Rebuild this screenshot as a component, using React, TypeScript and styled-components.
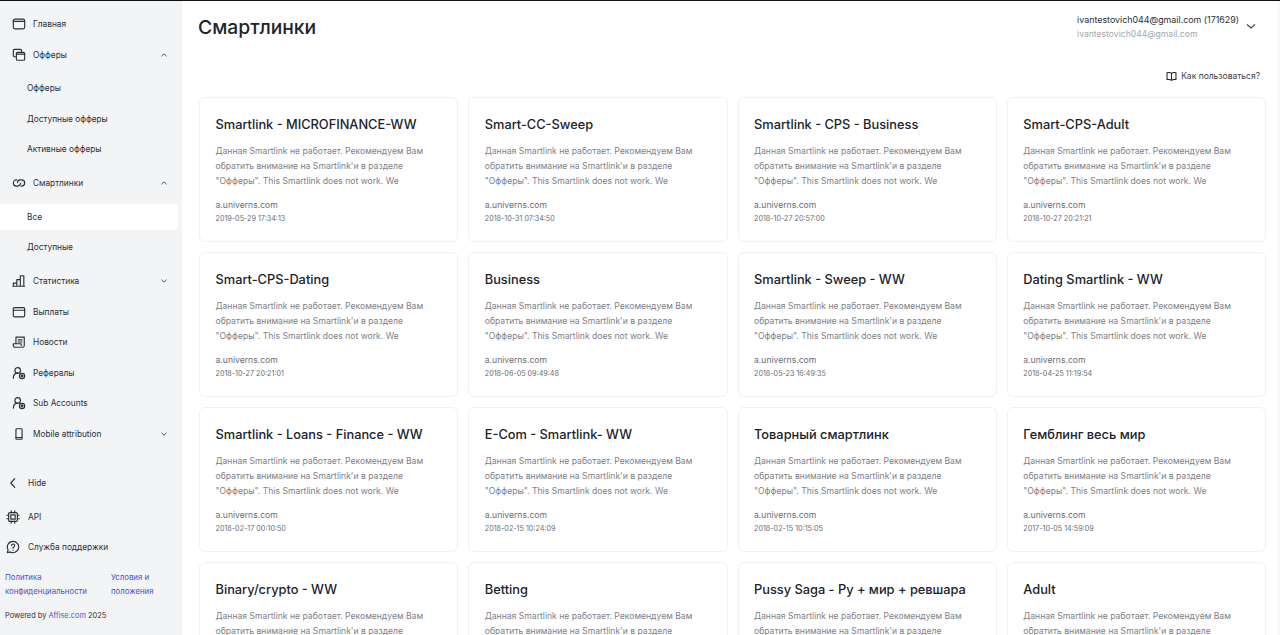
import React from "react";
import styled, { createGlobalStyle } from "styled-components";

const GlobalStyle = createGlobalStyle`
  html, body {
    margin: 0;
    height: 100%;
    overflow: hidden;
    background: #fff;
    font-family: Inter, "Noto Sans", sans-serif;
  }
  #root { height: 100%; }
  * { box-sizing: border-box; }
`;

const Page = styled.div`
  display: flex;
  height: 635px;
  border-top: 1px solid #111;
  overflow: hidden;
`;

const Sidebar = styled.aside`
  display: flex;
  flex-direction: column;
  flex: 0 0 182px;
  height: 100%;
  padding-top: 8px;
  background: #f3f4f6;
`;

const NavList = styled.nav`
  display: flex;
  flex-direction: column;
`;

const NavItem = styled.div`
  display: flex;
  flex: 0 0 auto;
  align-items: center;
  height: 30.5px;
  padding: 0 14px 0 12px;
  font-size: 8.3px;
  color: #2b2f38;
  svg.main { flex: 0 0 14px; margin-right: 7px; }
`;

const NavLabel = styled.span`
  flex: 1;
`;

const SubList = styled.div`
  display: flex;
  flex-direction: column;
  padding: 3.2px 0;
`;

const SubItem = styled.div<{ $active?: boolean }>`
  display: flex;
  align-items: center;
  height: ${({ $active }) => ($active ? "26.5px" : "30.5px")};
  margin: ${({ $active }) => ($active ? "2px 4px 2px 0" : "0")};
  padding-left: 27px;
  font-size: 8.3px;
  color: #2b2f38;
  background: ${({ $active }) => ($active ? "#fff" : "transparent")};
  border-radius: ${({ $active }) => ($active ? "0 4px 4px 0" : "0")};
`;

const BottomBlock = styled.div`
  display: flex;
  flex-direction: column;
  margin-top: 18.5px;
`;

const BottomItem = styled.div<{ $gap: number }>`
  display: flex;
  flex: 0 0 auto;
  align-items: center;
  height: 30.5px;
  margin-bottom: ${({ $gap }) => $gap}px;
  padding-left: 6px;
  font-size: 8.3px;
  color: #2b2f38;
  svg { flex: 0 0 14px; margin-right: 8px; }
`;

const LegalRow = styled.div`
  display: grid;
  grid-template-columns: 106px 1fr;
  margin-top: 9px;
  padding-left: 5px;
  font-size: 7.8px;
  line-height: 13.5px;
  color: #4a55c8;
`;

const Powered = styled.div`
  margin-top: 12px;
  padding-left: 5px;
  font-size: 7.4px;
  line-height: 12px;
  color: #2b2f38;
  a { color: #4a55c8; }
`;

const Main = styled.main`
  display: flex;
  flex-direction: column;
  flex: 1;
  min-width: 0;
  padding: 0 14px 0 17px;
  box-shadow: inset -3px 0 0 #f7f8f9;
`;

const Header = styled.header`
  display: flex;
  flex: 0 0 62px;
  justify-content: space-between;
  align-items: flex-start;
`;

const Title = styled.h1`
  margin: 13px 0 0 -1px;
  font-size: 19.3px;
  line-height: 27px;
  font-weight: 500;
  color: #20232a;
`;

const Account = styled.div`
  display: flex;
  align-items: center;
  gap: 6px;
  margin: 11px 9px 0 0;
`;

const AccountText = styled.div`
  font-size: 8.9px;
  line-height: 15px;
  color: #2b2f38;
  small {
    display: block;
    font-size: 8.6px;
    color: #a3a7ae;
  }
`;

const AccountChevron = styled.svg`
  margin-bottom: 3px;
`;

const HelpRow = styled.div`
  display: flex;
  flex: 0 0 26px;
  justify-content: flex-end;
  align-items: center;
  gap: 4px;
  margin-right: 6px;
  font-size: 8.5px;
  color: #3a3e46;
`;

const Grid = styled.div`
  display: grid;
  flex: 0 0 auto;
  grid-template-columns: repeat(4, 1fr);
  gap: 10.5px 10px;
  margin-top: 8px;
`;

const Card = styled.article`
  height: 144.5px;
  padding: 16.5px 15.5px 0;
  background: #fff;
  border: 1px solid #f0f1f3;
  border-radius: 6px;
`;

const CardTitle = styled.h2`
  margin: 0;
  font-size: 12.8px;
  line-height: 20px;
  font-weight: 500;
  color: #20232a;
  white-space: nowrap;
`;

const CardText = styled.p`
  margin: 9.5px 0 0;
  height: 45px;
  font-size: 8.6px;
  line-height: 15px;
  color: #7d8087;
`;

const Domain = styled.div`
  margin-top: 10px;
  font-size: 8.6px;
  line-height: 13px;
  color: #6a6d75;
`;

const Stamp = styled.div`
  margin-top: 1px;
  font-size: 7.2px;
  line-height: 12px;
  color: #6a6d75;
`;

const Ico = ({ children, size = 14 }: { children: React.ReactNode; size?: number }) => (
  <svg className="main" width={size} height={size} viewBox="0 0 16 16" fill="none" stroke="#2b2e35" strokeWidth="1.3" strokeLinecap="round" strokeLinejoin="round">
    {children}
  </svg>
);

const Chevron = ({ up }: { up?: boolean }) => (
  <svg width="8" height="8" viewBox="0 0 8 8" fill="none" stroke="#555" strokeWidth="1">
    <path d={up ? "M1.5 5.2 4 2.8l2.5 2.4" : "M1.5 2.8 4 5.2l2.5-2.4"} />
  </svg>
);

const TEXT =
  'Данная Smartlink не работает. Рекомендуем Вам обратить внимание на Smartlink\'и в разделе "Офферы". This Smartlink does not work. We';

const CARDS = [
  ["Smartlink - MICROFINANCE-WW", "2019-05-29 17:34:13"],
  ["Smart-CC-Sweep", "2018-10-31 07:34:50"],
  ["Smartlink - CPS - Business", "2018-10-27 20:57:00"],
  ["Smart-CPS-Adult", "2018-10-27 20:21:21"],
  ["Smart-CPS-Dating", "2018-10-27 20:21:01"],
  ["Business", "2018-06-05 09:49:48"],
  ["Smartlink - Sweep - WW", "2018-05-23 16:49:35"],
  ["Dating Smartlink - WW", "2018-04-25 11:19:54"],
  ["Smartlink - Loans - Finance - WW", "2018-02-17 00:10:50"],
  ["E-Com - Smartlink- WW", "2018-02-15 10:24:09"],
  ["Товарный смартлинк", "2018-02-15 10:15:05"],
  ["Гемблинг весь мир", "2017-10-05 14:59:09"],
  ["Binary/crypto - WW", "2017-10-05 14:59:09"],
  ["Betting", "2017-10-05 14:59:09"],
  ["Pussy Saga - Ру + мир + ревшара", "2017-10-05 14:59:09"],
  ["Adult", "2017-10-05 14:59:09"],
];

const referralIcon = (
  <>
    <circle cx="6.5" cy="5" r="3.2" />
    <path d="M1.5 14c0-3.2 1.8-5.6 5-5.8" />
    <circle cx="11.5" cy="11.5" r="3" />
    <circle cx="11.5" cy="11.5" r="1" fill="#2b2e35" />
  </>
);

const App = () => (
  <>
    <GlobalStyle />
    <Page>
      <Sidebar>
        <NavList>
          <NavItem>
            <Ico><rect x="1.5" y="2.5" width="13" height="11" rx="2" /><path d="M1.5 5h13" /></Ico>
            <NavLabel>Главная</NavLabel>
          </NavItem>
          <NavItem>
            <Ico><rect x="1.5" y="1.5" width="9.5" height="8.5" rx="1.5" /><rect x="5" y="5" width="9.5" height="9" rx="1.5" fill="#f3f4f6" /><path d="M5 7h9.5" /></Ico>
            <NavLabel>Офферы</NavLabel>
            <Chevron up />
          </NavItem>
          <SubList>
            <SubItem>Офферы</SubItem>
            <SubItem>Доступные офферы</SubItem>
            <SubItem>Активные офферы</SubItem>
          </SubList>
          <NavItem>
            <Ico><path d="M5.5 4.5H5a3.5 3.5 0 0 0 0 7h1.5a3.5 3.5 0 0 0 3.3-3" /><path d="M10.5 11.5H11a3.5 3.5 0 0 0 0-7H9.5a3.5 3.5 0 0 0-3.3 3" /></Ico>
            <NavLabel>Смартлинки</NavLabel>
            <Chevron up />
          </NavItem>
          <SubList>
            <SubItem $active>Все</SubItem>
            <SubItem>Доступные</SubItem>
          </SubList>
          <NavItem>
            <Ico><path d="M1.5 14v-3.5h4V14M5.5 14V6.5h4V14M9.5 14V2h4v12M1 14h13.5" /></Ico>
            <NavLabel>Статистика</NavLabel>
            <Chevron />
          </NavItem>
          <NavItem>
            <Ico><rect x="1.5" y="3" width="13" height="10.5" rx="1.5" /><path d="M1.5 6h13" /></Ico>
            <NavLabel>Выплаты</NavLabel>
          </NavItem>
          <NavItem>
            <Ico><path d="M4.5 10V2.5H14V12a2 2 0 0 1-2 2H3.5a2 2 0 0 1-2-2v-2h9v2" /><path d="M7 5.5h4.5M7 8h4.5" /></Ico>
            <NavLabel>Новости</NavLabel>
          </NavItem>
          <NavItem>
            <Ico>{referralIcon}</Ico>
            <NavLabel>Рефералы</NavLabel>
          </NavItem>
          <NavItem>
            <Ico>{referralIcon}</Ico>
            <NavLabel>Sub Accounts</NavLabel>
          </NavItem>
          <NavItem>
            <Ico><rect x="4.5" y="2" width="7" height="12" rx="1" /><path d="M4.5 12h7" /></Ico>
            <NavLabel>Mobile attribution</NavLabel>
            <Chevron />
          </NavItem>
        </NavList>
        <BottomBlock>
          <BottomItem $gap={3.5}>
            <Ico><path d="M10 3 5.5 8l4.5 5" /></Ico>
            Hide
          </BottomItem>
          <BottomItem $gap={0}>
            <Ico><rect x="3" y="3" width="10" height="10" rx="1.5" /><rect x="5.5" y="5.5" width="5" height="5" /><path d="M6 1v2M10 1v2M6 13v2M10 13v2M1 6h2M1 10h2M13 6h2M13 10h2" /></Ico>
            API
          </BottomItem>
          <BottomItem $gap={0}>
            <Ico><path d="M8 1.5a6.5 6.5 0 1 1-3.3 12.1L1.5 14.5l.9-3.2A6.5 6.5 0 0 1 8 1.5Z" /><path d="M6.3 6.3a1.8 1.8 0 1 1 2.7 1.6c-.6.4-1 .8-1 1.5M8 11.5v.1" /></Ico>
            Служба поддержки
          </BottomItem>
          <LegalRow>
            <span>Политика конфиденциальности</span>
            <span>Условия и положения</span>
          </LegalRow>
          <Powered>Powered by <a>Affise.com</a> 2025</Powered>
        </BottomBlock>
      </Sidebar>
      <Main>
        <Header>
          <Title>Смартлинки</Title>
          <Account>
            <AccountText>
              ivantestovich044@gmail.com (171629)
              <small>ivantestovich044@gmail.com</small>
            </AccountText>
            <AccountChevron width="12" height="12" viewBox="0 0 12 12" fill="none" stroke="#444" strokeWidth="1.1"><path d="M2 4.5 6 8l4-3.5" /></AccountChevron>
          </Account>
        </Header>
        <HelpRow>
          <svg width="11" height="11" viewBox="0 0 16 16" fill="none" stroke="#222" strokeWidth="1.5"><path d="M8 3.5C6.5 2.2 4 2 1.5 2.500v10c2.500-.5 5-.3 6.500 1 1.500-1.300 4-1.500 6.500-1v-10C12 2 9.500 2.200 8 3.500ZM8 3.500v10" /></svg>
          Как пользоваться?
        </HelpRow>
        <Grid>
          {CARDS.map(([title, stamp]) => (
            <Card key={title}>
              <CardTitle>{title}</CardTitle>
              <CardText>{TEXT}</CardText>
              <Domain>a.univerns.com</Domain>
              <Stamp>{stamp}</Stamp>
            </Card>
          ))}
        </Grid>
      </Main>
    </Page>
  </>
);

export default App;
